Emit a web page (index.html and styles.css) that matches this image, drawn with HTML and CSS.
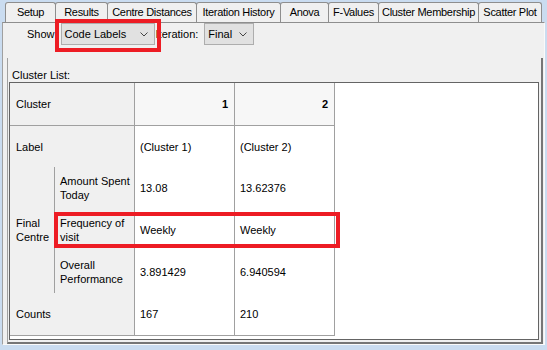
FILE: index.html
```html
<!DOCTYPE html>
<html lang="en">
<head>
    <meta charset="UTF-8">
    <meta name="viewport" content="width=device-width, initial-scale=1.0">
    <title>Cluster Results</title>
    <link rel="stylesheet" href="styles.css">
</head>
<body>
    <div class="window">
        <div class="tabs">
            <div class="tab tab-setup">Setup</div>
            <div class="tab tab-results active">Results</div>
            <div class="tab tab-distances">Centre Distances</div>
            <div class="tab tab-history">Iteration History</div>
            <div class="tab tab-anova">Anova</div>
            <div class="tab tab-fvalues">F-Values</div>
            <div class="tab tab-membership">Cluster Membership</div>
            <div class="tab tab-scatter">Scatter Plot</div>
        </div>

        <div class="page">
            <div class="toolbar">
                <span class="label">Show</span>
                <div class="combo combo-show">
                    <span>Code Labels</span>
                    <svg width="8" height="5" viewBox="0 0 8 5"><path d="M0.5 0.5 L4 4 L7.5 0.5" fill="none" stroke="#444"/></svg>
                </div>
                <span class="label label-iter">Iteration:</span>
                <div class="combo combo-iter">
                    <span>Final</span>
                    <svg width="8" height="5" viewBox="0 0 8 5"><path d="M0.5 0.5 L4 4 L7.5 0.5" fill="none" stroke="#444"/></svg>
                </div>
            </div>

            <div class="panel">
                <div class="caption">Cluster List:</div>
                <div class="scroll">
                    <table class="grid">
                        <colgroup>
                            <col class="c-group">
                            <col class="c-sub">
                            <col class="c-data">
                            <col class="c-data">
                        </colgroup>
                        <tr class="r-head">
                            <th class="rowhead" colspan="2">Cluster</th>
                            <th class="colhead num">1</th>
                            <th class="colhead num">2</th>
                        </tr>
                        <tr class="r-label">
                            <td class="rowhead" colspan="2">Label</td>
                            <td>(Cluster 1)</td>
                            <td>(Cluster 2)</td>
                        </tr>
                        <tr class="r-item">
                            <td class="rowhead group" rowspan="3">Final Centre</td>
                            <td class="rowhead sub">Amount Spent Today</td>
                            <td>13.08</td>
                            <td>13.62376</td>
                        </tr>
                        <tr class="r-item">
                            <td class="rowhead sub">Frequency of visit</td>
                            <td>Weekly</td>
                            <td>Weekly</td>
                        </tr>
                        <tr class="r-item">
                            <td class="rowhead sub">Overall Performance</td>
                            <td>3.891429</td>
                            <td>6.940594</td>
                        </tr>
                        <tr class="r-last">
                            <td class="rowhead" colspan="2">Counts</td>
                            <td>167</td>
                            <td>210</td>
                        </tr>
                    </table>
                </div>
            </div>
        </div>
    </div>

    <!-- annotation boxes -->
    <div class="highlight highlight-show"></div>
    <div class="highlight highlight-row"></div>
</body>
</html>
```

FILE: styles.css
```css
body {
    position: relative;
    width: 547px;
    height: 350px;
    margin: 0;
    overflow: hidden;
    background: #cadcf0;
    font-family: 'Liberation Sans', Arial, sans-serif;
    font-size: 11px;
    color: #000;
}

.window {
    padding-top: 2px;
}

/* Tab strip */
.tabs {
    display: flex;
    height: 20px;
    margin-left: 5px;
}

.tab {
    flex: none;
    height: 20px;
    box-sizing: border-box;
    border: 1px solid #8e8e8e;
    border-bottom: 0;
    border-radius: 3px 3px 0 0;
    background: #f0f0f0;
    line-height: 19px;
    text-align: center;
    letter-spacing: -0.3px;
    white-space: nowrap;
    overflow: hidden;
}

.tab + .tab {
    margin-left: -1px;
}

.tab-setup { width: 51px; }
.tab-results { width: 53px; }
.tab-distances { width: 90px; }
.tab-history { width: 85px; }
.tab-anova { width: 49px; }
.tab-fvalues { width: 51px; }
.tab-membership { width: 101px; }
.tab-scatter { width: 64px; }

/* Tab page */
.page {
    display: flex;
    flex-direction: column;
    width: 543px;
    height: 323px;
    margin-left: 2px;
    box-sizing: border-box;
    border-top: 1px solid #8e8e8e;
    border-left: 1px solid #a0a0a0;
    border-right: 1px solid #fafafa;
    border-bottom: 1px solid #fafafa;
    background: #f0f0f0;
}

.toolbar {
    display: flex;
    align-items: center;
    height: 22px;
    padding-left: 24px;
}

.combo {
    display: flex;
    align-items: center;
    justify-content: space-between;
    height: 22px;
    box-sizing: border-box;
    padding: 0 6px 0 3px;
    border: 1px solid #adadad;
    background: #e1e1e1;
}

.combo-show {
    width: 94px;
    margin-left: 6px;
}

.label-iter {
    margin-left: 1px;
}

.combo-iter {
    width: 50px;
    margin-left: 6px;
}

.panel {
    flex: 1;
    display: flex;
    flex-direction: column;
    margin: 13px 1px 0 4px;
    padding: 10px 0 2px 1px;
    border-left: 1px solid #a0a0a0;
    border-right: 2px solid #767676;
    border-bottom: 2px solid #767676;
}

.caption {
    padding-left: 3px;
    line-height: 14px;
}

.scroll {
    flex: 1;
    margin-right: 2px;
    border: 1px solid #646464;
    background: #fff;
    overflow: hidden;
}

/* Results grid */
.grid {
    width: 325px;
    table-layout: fixed;
    border-collapse: separate;
    border-spacing: 0;
}

.c-group { width: 45px; }
.c-sub { width: 80px; }
.c-data { width: 100px; }

.grid th,
.grid td {
    box-sizing: border-box;
    padding: 0 4px 0 5px;
    border-right: 1px solid #a0a0a0;
    line-height: 14px;
    text-align: left;
    vertical-align: middle;
    font-weight: normal;
}

.grid .rowhead {
    padding-left: 6px;
    background: #f0f0f0;
}

.grid .sub {
    padding: 0 2px 0 5px;
}

.grid .colhead {
    background: #f7f7f7;
}

.grid .num {
    padding-right: 6px;
    text-align: right;
    font-weight: bold;
}

.r-head th {
    border-bottom: 1px solid #a0a0a0;
}

.r-last td {
    border-bottom: 1px solid #a0a0a0;
}

.r-head { height: 43px; }
.r-label { height: 41px; }
.r-item { height: 42px; }
.r-last { height: 43px; }

/* Red annotation boxes */
.highlight {
    position: absolute;
    box-sizing: border-box;
    border: 4px solid #ed1c24;
}

.highlight-show {
    left: 55px;
    top: 19px;
    width: 106px;
    height: 33px;
}

.highlight-row {
    left: 54px;
    top: 212px;
    width: 286px;
    height: 36px;
}
```
